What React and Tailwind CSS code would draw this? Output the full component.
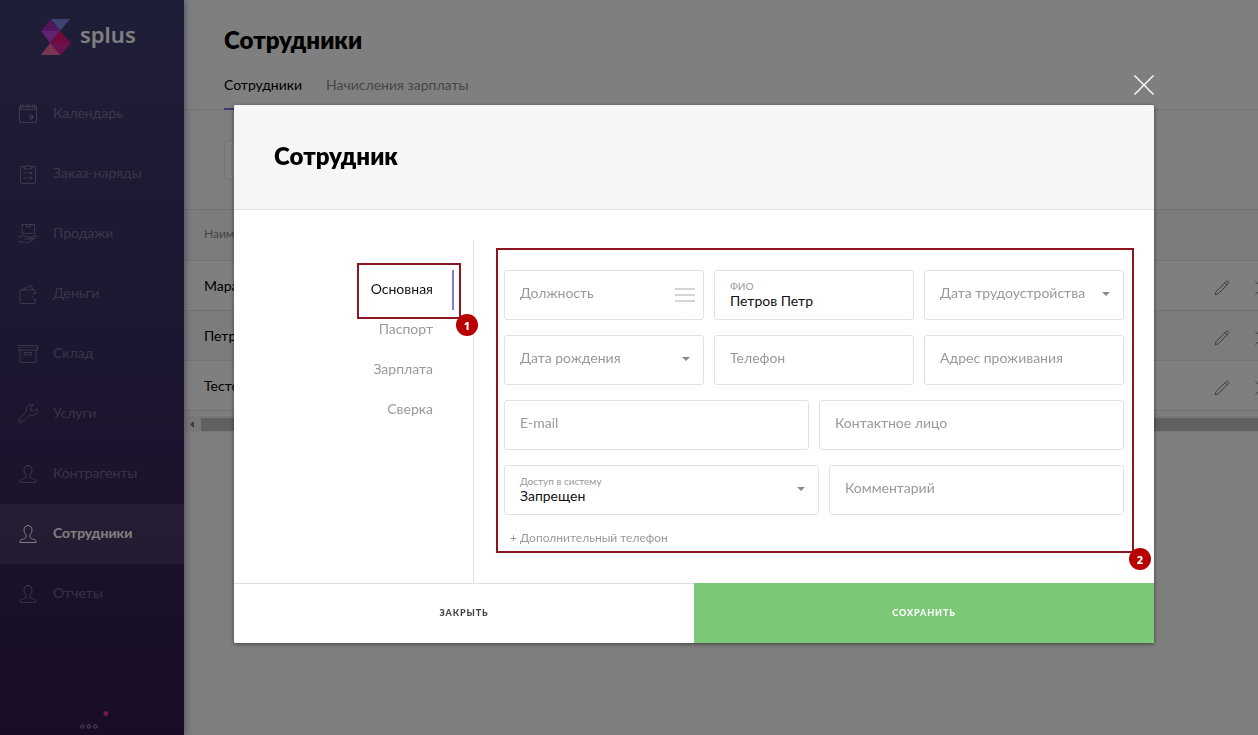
import React from "react";

const iconProps = {
  viewBox: "0 0 20 20",
  className: "h-5 w-5 shrink-0",
  fill: "none",
  stroke: "currentColor",
  strokeWidth: 1,
  strokeLinecap: "round",
  strokeLinejoin: "round",
  "aria-hidden": true,
};

const CalendarIcon = () => (
  <svg {...iconProps}>
    <path d="M2.500 2.500h-1v16h17v-16h-1M5.500 2.500h3M11.500 2.500h2.500M1.500 5.500h17" />
    <path d="M3 1h2v2.500H3zM9 1h2v2.500H9zM15 1h2v2.500h-2z" />
    <circle cx="13" cy="12.500" r="1.500" />
    <path d="M14.500 12.500c.3 2-.5 3.500-2.500 3.500" />
  </svg>
);

const ClipboardIcon = () => (
  <svg {...iconProps}>
    <path d="M6 2.500H4A1.500 1.500 0 0 0 2.500 4v14A1.500 1.500 0 0 0 4 19.500h12a1.500 1.500 0 0 0 1.500-1.500V4A1.500 1.500 0 0 0 16 2.500h-2" />
    <path d="M6 4.500V2.500h2.500a1.500 1.500 0 0 1 3 0H14v2zM5.500 9l1 1 1.500-2M10 9h4M5.500 14l1 1 1.500-2M10 14h4" />
    <path d="M13 8l1 1-1 1M13 13l1 1-1 1" />
  </svg>
);

const HandBoxIcon = () => (
  <svg {...iconProps}>
    <path d="M4.500.5h12v9h-12zM8.500.5V3h4V.5" />
    <path d="M.5 13.500c2-2 4.500-2.500 6.500-1l4 .2c1.500.2 1.500 2 0 2.200l-4 .1M11.500 14l6-2.500c1.500-.3 2 .8 1 1.500L13 17c-1.500 1.500-3 2-5 1.700L4 18H.5" />
    <path d="M12 16l4-2.500" />
  </svg>
);

const WalletIcon = () => (
  <svg {...iconProps}>
    <path d="M17.500 9V7.500a1.500 1.500 0 0 0-1.500-1.500H3.500a1.500 1.500 0 0 0-1.500 1.500v10.500a1.500 1.500 0 0 0 1.500 1.500h12.500a1.500 1.500 0 0 0 1.500-1.500V15.500" />
    <path d="M3 5.800L12.500 2c.8-.3 1.300 0 1.500.8l.5 2.800M17.500 9.500H15M17.500 15H15M14.500 12.300h.5" />
  </svg>
);

const ArchiveIcon = () => (
  <svg {...iconProps}>
    <path d="M.5 1.500h19V6H.5zM2 6v12.500h16V6M6.500 8.500h7v2.500h-7z" />
    <path d="M2 3.500h16" strokeOpacity="0.5" />
  </svg>
);

const WrenchIcon = () => (
  <svg {...iconProps}>
    <path d="M15 .8a5.200 5.200 0 0 0-6.500 6.700L.9 15.300a2.300 2.300 0 0 0 0 3.200c.9.9 2.300.9 3.200 0l7.700-7.600a5.200 5.200 0 0 0 7.400-6.300l-3.300 2.600-2.700-.5-.6-2.800z" />
    <circle cx="3" cy="16.700" r=".5" />
  </svg>
);

const PersonIcon = () => (
  <svg {...iconProps}>
    <path d="M10 1.500c-2.500 0-4 1.700-4 4.200 0 2 .7 3.800 2 5v2.500c-.2 1-1 1.300-2.300 1.600C3.500 15.400 2.300 16 2 17.300v1.200h16v-1.200c-.3-1.300-1.500-1.900-3.700-2.500-1.300-.3-2.100-.6-2.300-1.600v-2.500c1.300-1.200 2-3 2-5 0-2.500-1.500-4.200-4-4.200z" />
  </svg>
);

const PencilIcon = () => (
  <svg
    viewBox="0 0 16 16"
    className="h-4 w-4"
    fill="none"
    stroke="currentColor"
    strokeLinejoin="round"
    aria-hidden="true"
  >
    <path d="M1.200 14.800l.9-3.300L12.200 1.600c.6-.6 1.400-.6 2 0s.6 1.400 0 2L4.300 13.800zM11 2.800l2.100 2.100" />
  </svg>
);

const CrossIcon = () => (
  <svg viewBox="0 0 16 16" className="h-4 w-4" fill="none" stroke="currentColor" aria-hidden="true">
    <path d="M1.500 1.500l13 13M14.500 1.500l-13 13" />
  </svg>
);

const Caret = () => (
  <svg viewBox="0 0 8 8" className="h-2 w-2 shrink-0" fill="#8a8a8a" aria-hidden="true">
    <path d="M0 1h8L4 5z" />
  </svg>
);

const menu = [
  { title: "Календарь", Icon: CalendarIcon },
  { title: "Заказ-наряды", Icon: ClipboardIcon },
  { title: "Продажи", Icon: HandBoxIcon },
  { title: "Деньги", Icon: WalletIcon },
  { title: "Склад", Icon: ArchiveIcon },
  { title: "Услуги", Icon: WrenchIcon },
  { title: "Контрагенты", Icon: PersonIcon },
  { title: "Сотрудники", Icon: PersonIcon, active: true },
  { title: "Отчеты", Icon: PersonIcon },
];

function Sidebar() {
  return (
    <aside className="relative z-10 flex min-h-screen w-[184px] shrink-0 flex-col bg-linear-to-b from-[#3e3d70] via-[#3a2a5e] via-55% to-[#32194e] shadow-[0_0_8px_#8a80b8]">
      <div className="flex h-[84px] items-start gap-[9px] pt-[18px] pl-10">
        <svg viewBox="0 0 31 37" className="h-[37px] w-[31px]" aria-hidden="true">
          <path d="M11 1h19L20 13z" fill="#7f85ea" />
          <path d="M11 1L1 13h19z" fill="#a528b8" />
          <path d="M1 13h19L10 25z" fill="#c04be0" />
          <path d="M20 13L10 25h21z" fill="#e4157c" />
          <path d="M10 25h21L20.500 37z" fill="#d9209c" />
          <path d="M10 25L1 37h19.500z" fill="#ee6aa6" />
        </svg>
        <span className="font-['Noto_Sans',sans-serif] text-[22px] leading-8 font-semibold text-white">
          splus
        </span>
      </div>
      <nav className="flex flex-col">
        {menu.map(({ title, Icon, active }) => (
          <a
            key={title}
            href="#"
            className={
              active
                ? "flex h-[60px] items-center gap-[15px] bg-white/10 pl-[18px] text-sm font-bold text-white"
                : "flex h-[60px] items-center gap-[15px] pl-[18px] text-sm text-white/30"
            }
          >
            <Icon />
            <span className="pb-0.5">{title}</span>
          </a>
        ))}
      </nav>
      <div className="mt-auto flex justify-center pb-[5px]">
        <svg viewBox="0 0 32 20" className="h-5 w-8" fill="none" aria-hidden="true">
          <g stroke="#a79fb5">
            <circle cx="6.500" cy="16.500" r="1.700" />
            <circle cx="13" cy="16.500" r="1.700" />
            <circle cx="19.500" cy="16.500" r="1.700" />
          </g>
          <circle cx="30" cy="3.500" r="2.500" fill="#e0358c" />
        </svg>
      </div>
    </aside>
  );
}

const staff = ["Марат", "Петров Петр", "Тестовый"];

function StaffPage() {
  return (
    <main className="flex min-w-0 flex-1 flex-col overflow-hidden bg-[#fcfcfc]">
      <header className="border-b border-[#e6e6e6] bg-white pl-10">
        <h1 className="pt-6 text-2xl leading-8 font-extrabold text-black">Сотрудники</h1>
        <div className="mt-[9px] flex gap-6 text-sm leading-5">
          <a href="#" className="-mb-px border-b-2 border-[#7b74d8] pt-[10px] pb-[13px] text-black">
            Сотрудники
          </a>
          <a href="#" className="pt-[10px] pb-[13px] text-[#8c8c8c]">
            Начисления зарплаты
          </a>
        </div>
      </header>
      <div className="flex h-[99px] items-center px-10">
        <input
          aria-label="Поиск"
          className="h-10 w-80 rounded-sm border border-[#e6e6e6] bg-white"
        />
      </div>
      <table className="w-[1100px] table-fixed border-collapse text-left text-sm">
        <thead>
          <tr className="h-[51px] border-y border-[#e6e6e6] bg-[#f8f8f8]">
            <th className="pb-0.5 pl-5 text-xs font-normal text-[#8c8c8c]">Наименование</th>
            <th className="w-[98px]" />
          </tr>
        </thead>
        <tbody>
          {staff.map((name) => (
            <tr key={name} className="h-[50px] border-b border-[#e6e6e6] bg-white even:bg-[#f8f8f8]">
              <td className="pl-5 text-black">{name}</td>
              <td className="w-[98px] pt-1 text-[#777]">
                <div className="flex gap-6 pl-[28px]">
                  <button type="button" aria-label="Изменить">
                    <PencilIcon />
                  </button>
                  <button type="button" aria-label="Удалить">
                    <CrossIcon />
                  </button>
                </div>
              </td>
            </tr>
          ))}
        </tbody>
      </table>
      <div className="mt-[5px] flex h-4 items-center bg-[#f1f1f1]">
        <svg viewBox="0 0 17 16" className="h-4 w-[17px] shrink-0" fill="#777" aria-hidden="true">
          <path d="M10 5v7L6 8.500z" />
        </svg>
        <div className="h-[13px] flex-1 bg-[#c1c1c1]" />
      </div>
    </main>
  );
}

const boxClass =
  "flex h-[50px] min-w-0 items-center rounded-[3px] border border-[#dfe3e6] bg-white pr-[13px] pl-[15px]";
const inputClass =
  "min-w-0 flex-1 bg-transparent pb-1 text-sm leading-5 text-black outline-none placeholder:text-[#999] placeholder:opacity-100";

function Field({ name, children }) {
  return (
    <div className={boxClass}>
      <input aria-label={name} placeholder={name} className={inputClass} />
      {children}
    </div>
  );
}

function Badge({ className, children }) {
  return (
    <span
      className={
        "absolute flex h-[22px] w-[22px] items-center justify-center rounded-full bg-[#b80000] font-['Noto_Sans',sans-serif] text-[11px] leading-none font-extrabold text-white " +
        className
      }
    >
      {children}
    </span>
  );
}

const tabs = ["Паспорт", "Зарплата", "Сверка"];

function EmployeeDialog() {
  return (
    <div className="fixed inset-0 z-20 overflow-auto bg-black/50 pt-[105px] pr-[104px] pl-[234px]">
      <div
        role="dialog"
        aria-modal="true"
        aria-labelledby="employee-title"
        className="relative rounded-xs bg-white shadow-[0_1px_4px_rgba(0,0,0,0.5)]"
      >
        <button type="button" aria-label="Закрыть окно" className="absolute -top-[30px] right-0 text-white">
          <svg viewBox="0 0 20 20" className="h-5 w-5" stroke="currentColor" strokeWidth="1.400" aria-hidden="true">
            <path d="M.5.5l19 19M19.500.5l-19 19" />
          </svg>
        </button>

        <header className="flex h-[105px] items-center rounded-t-xs border-b border-[#e2e2e2] bg-[#f6f6f6] px-10 pb-0.5">
          <h2 id="employee-title" className="text-2xl leading-8 font-extrabold text-black">
            Сотрудник
          </h2>
        </header>

        <div className="flex">
          <nav className="mt-[30px] flex w-60 shrink-0 flex-col border-r border-[#e0e0e0] pt-[30px] text-right text-sm">
            <div className="relative">
              <a
                href="#"
                className="mr-[19px] flex h-10 items-center justify-end border-r-2 border-[#8079dc] pr-[19px] pb-0.5 text-[#111]"
              >
                Основная
              </a>
              <span className="pointer-events-none absolute -top-[7px] right-3 -bottom-[9px] w-[104px] border-2 border-[#8e1620]" />
              <Badge className="top-[44px] -right-[5px]">1</Badge>
            </div>
            {tabs.map((tab) => (
              <a
                key={tab}
                href="#"
                className="flex h-10 items-center justify-end pr-10 pb-0.5 text-[#999]"
              >
                {tab}
              </a>
            ))}
          </nav>

          <form className="relative mt-[38px] mr-5 mb-[30px] ml-[22px] flex min-w-0 flex-1 flex-col gap-[15px] border-2 border-[#8e1620] pt-5 pr-2 pl-[6px]">
            <div className="grid grid-cols-3 gap-x-[10px] gap-y-[15px]">
              <div className="flex h-[50px] min-w-0 items-center rounded-[3px] border border-[#dfe3e6] bg-white pr-2 pl-[15px]">
                <input aria-label="Должность" placeholder="Должность" className={inputClass} />
                <button type="button" aria-label="Выбрать должность">
                  <svg viewBox="0 0 20 14" className="h-[14px] w-5" stroke="#c8c8c8" strokeWidth="1.600" aria-hidden="true">
                    <path d="M0 1h20M0 7h20M0 13h20" />
                  </svg>
                </button>
              </div>
              <div className="flex h-[50px] min-w-0 flex-col justify-center rounded-[3px] border border-[#dfe3e6] bg-white px-[15px]">
                <label htmlFor="full-name" className="text-[10px] leading-3 text-[#999]">
                  ФИО
                </label>
                <input
                  id="full-name"
                  defaultValue="Петров Петр"
                  className="w-full bg-transparent text-sm leading-[18px] text-[#111] outline-none"
                />
              </div>
              <Field name="Дата трудоустройства">
                <Caret />
              </Field>
              <Field name="Дата рождения">
                <Caret />
              </Field>
              <Field name="Телефон" />
              <Field name="Адрес проживания" />
            </div>
            <div className="grid grid-cols-2 gap-[10px]">
              <Field name="E-mail" />
              <Field name="Контактное лицо" />
            </div>
            <div className="grid grid-cols-[315fr_295fr] gap-[10px]">
              <div className={boxClass}>
                <div className="flex min-w-0 flex-1 flex-col">
                  <label htmlFor="access" className="text-[10px] leading-3 text-[#999]">
                    Доступ в систему
                  </label>
                  <select
                    id="access"
                    className="w-full appearance-none bg-transparent text-sm leading-[18px] text-[#111] outline-none"
                  >
                    <option>Запрещен</option>
                  </select>
                </div>
                <Caret />
              </div>
              <Field name="Комментарий" />
            </div>
            <button type="button" className="mb-[5px] self-start pl-[6px] text-xs leading-4 text-[#999]">
              + Дополнительный телефон
            </button>
            <Badge className="-right-[19px] -bottom-[19px]">2</Badge>
          </form>
        </div>

        <footer className="grid h-[60px] grid-cols-2 text-[9px] font-black tracking-widest uppercase">
          <button type="button" className="rounded-bl-xs border-t border-[#e0e0e0] bg-white pb-px text-[#444] uppercase">
            Закрыть
          </button>
          <button type="button" className="rounded-br-xs bg-[#7bc876] text-white uppercase">
            Сохранить
          </button>
        </footer>
      </div>
    </div>
  );
}

export default function App() {
  return (
    <div className="flex min-h-screen overflow-hidden bg-white font-[Lato,sans-serif]">
      <Sidebar />
      <StaffPage />
      <EmployeeDialog />
    </div>
  );
}
